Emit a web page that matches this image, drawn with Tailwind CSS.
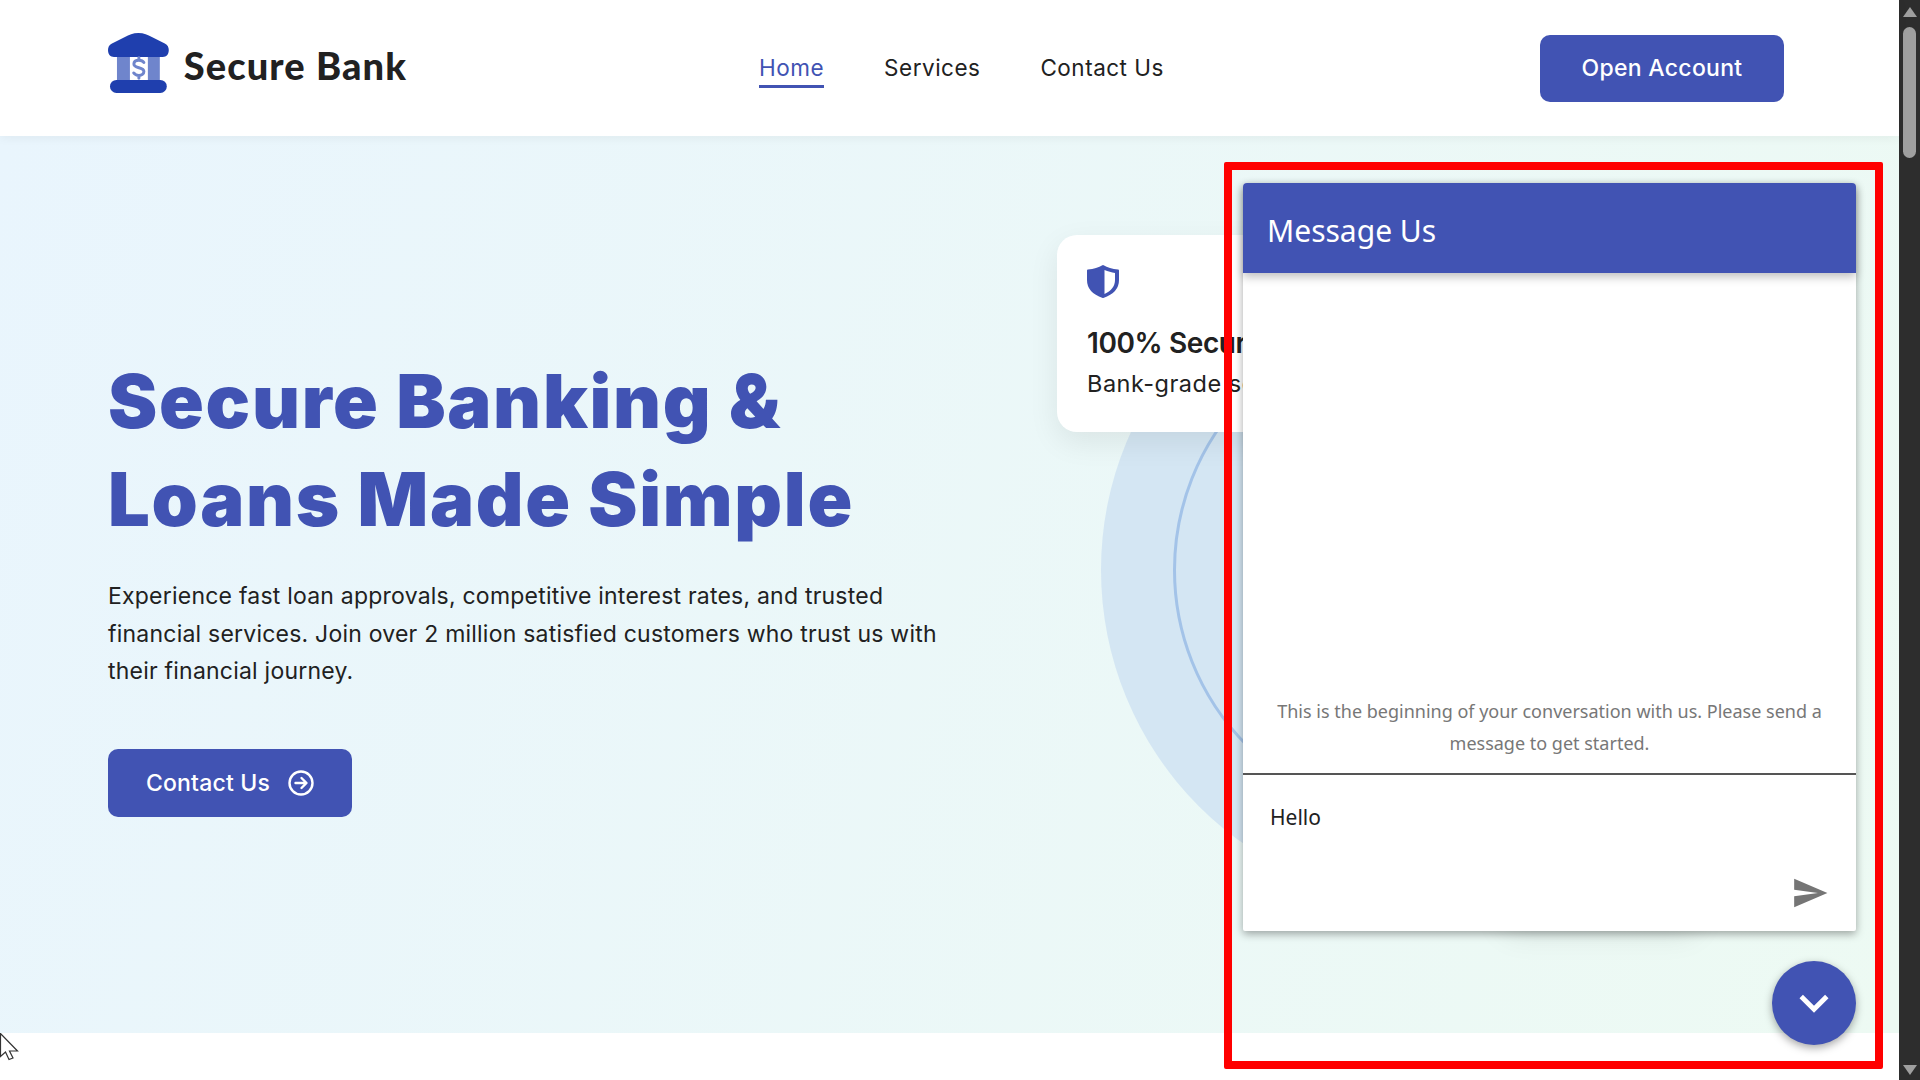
<!DOCTYPE html>
<html lang="en">
<head>
    <meta charset="UTF-8">
    <meta name="viewport" content="width=device-width, initial-scale=1.0">
    <title>Secure Bank</title>
    <script src="https://cdn.jsdelivr.net/npm/@tailwindcss/browser@4"></script>
</head>
<body class="h-[1080px] w-[1920px] overflow-hidden bg-white font-['Inter',sans-serif] text-[#212121]">
    <div class="relative flex h-[1080px]">
        <!-- Page -->
        <div class="relative flex h-full flex-1 flex-col">
            <header class="relative z-10 flex h-[136px] items-center justify-between bg-white pl-[108px] pr-[115px] shadow-[0_2px_10px_rgba(0,0,0,0.05)]">
                <div class="mb-[10px] flex w-[299px] items-center gap-[15px]">
                    <svg class="h-[60px] w-[61px]" viewBox="0 0 61 60">
                        <rect x="9" y="20" width="43" height="30" fill="#6f85cc"/>
                        <rect x="22" y="22" width="18" height="28" fill="#ffffff"/>
                        <path d="M30.500 0C36 0 40 1.800 44 4L57 10.500C60 12 61 14.500 61 17C61 21.500 58.500 24 55 24H6C2.500 24 0 21.500 0 17C0 14.500 1 12 4 10.500L17 4C21 1.800 25 0 30.500 0Z" fill="#1f3fae"/>
                        <rect x="2" y="47" width="57" height="13" rx="6.500" fill="#1f3fae"/>
                        <path d="M36 29.500C35 27.800 33 27.200 31 27.200C28 27.200 26 28.700 26 31C26 36 36 33.500 36 38.500C36 41 33.800 42.500 31 42.500C28.800 42.500 27 41.700 25.800 40M31 24.800V27.200M31 42.500V45.200" fill="none" stroke="#6f85cc" stroke-width="3" stroke-linecap="round"/>
                    </svg>
                    <span class="mt-[4px] whitespace-nowrap font-['Lato',sans-serif] text-[38px] font-black leading-none tracking-[1.1px] text-[#212121]">Secure Bank</span>
                </div>
                <nav class="mr-[24px] flex items-center gap-[60px] pt-[3px] text-[22.5px] leading-[32px] tracking-[0.5px]">
                    <a class="border-b-[3px] border-[#4153b3] pb-[1px] text-[#4153b3]">Home</a>
                    <a class="pb-[4px]">Services</a>
                    <a class="pb-[4px]">Contact Us</a>
                </nav>
                <button class="flex h-[67px] w-[244px] items-center justify-center rounded-[10px] bg-[#4153b3] text-[23px] font-medium tracking-[0.3px] text-white">Open Account</button>
            </header>

            <section class="relative h-[897px] overflow-hidden bg-linear-[110deg] from-[#e9f5fd] to-[#edfaf3] pl-[108px] pt-[216px]">
                <h1 class="text-[74px] font-black leading-[98px] tracking-[1.7px] text-[#4153b3]">Secure Banking &amp;<br>Loans Made Simple</h1>
                <p class="mt-[30px] w-[860px] text-[23px] leading-[37.5px] tracking-[0.22px] text-[#212121]">Experience fast loan approvals, competitive interest rates, and trusted<br>financial services. Join over 2 million satisfied customers who trust us with<br>their financial journey.</p>
                <button class="mt-[58px] flex h-[68px] w-[244px] items-center justify-center gap-[18px] rounded-[10px] bg-[#4153b3] pt-[1px] text-[23px] font-medium tracking-[0.2px] text-white">
                    Contact Us
                    <svg class="h-[26px] w-[26px]" viewBox="0 0 26 26" fill="none" stroke="#ffffff" stroke-width="2.400" stroke-linecap="round" stroke-linejoin="round"><circle cx="13" cy="13" r="11.500"/><path d="M7.500 13H18M13.500 8l5 5-5 5"/></svg>
                </button>

                <!-- Hero art behind the chat panel -->
                <div class="absolute left-[1101px] top-[100px] h-[668px] w-[668px] rounded-full bg-[#d4e6f3]"></div>
                <div class="absolute left-[1173px] top-[184px] h-[500px] w-[500px] rounded-full border-[3px] border-[#a3c3e8]"></div>
                <div class="absolute left-[1500px] top-[600px] h-[190px] w-[200px] rounded-[20px] bg-white shadow-[0_10px_30px_rgba(0,0,0,0.08)]"></div>
                <div class="absolute left-[1057px] top-[99px] h-[197px] w-[340px] rounded-[20px] bg-white pl-[30px] pt-[30px] shadow-[0_10px_30px_rgba(0,0,0,0.08)]">
                    <svg class="h-[33px] w-[32px]" viewBox="0 0 32 33">
                        <path d="M16 1C20 3.500 25.500 5 31 5.500V15C31 23.500 25 29 16 32C7 29 1 23.500 1 15V5.500C6.500 5 12 3.500 16 1Z" fill="#4153b3" stroke="#4153b3" stroke-width="2" stroke-linejoin="round"/>
                        <path d="M17.500 5C21 6.500 24.500 7.500 28 7.900V15C28 21.500 24 26 17.500 29Z" fill="#ffffff"/>
                    </svg>
                    <div class="mt-[27px] whitespace-nowrap text-[28px] font-semibold leading-[36px] tracking-[-0.4px]">100% Secure</div>
                    <div class="mt-[6px] whitespace-nowrap text-[23.5px] leading-[34px] tracking-[0.5px]">Bank-grade security</div>
                </div>
            </section>
            <div class="flex-1 bg-white"></div>
        </div>

        <!-- Scrollbar -->
        <aside class="flex h-full w-[21px] flex-col items-center bg-[#2d2d2d]">
            <div class="mt-[7px] h-0 w-0 border-x-[7px] border-b-[10px] border-x-transparent border-b-[#9f9f9f]"></div>
            <div class="mt-[10px] h-[131px] w-[13px] rounded-full bg-[#9f9f9f]"></div>
            <div class="mt-auto mb-[5px] h-0 w-0 border-x-[7px] border-t-[10px] border-x-transparent border-t-[#9f9f9f]"></div>
        </aside>

        <!-- Chat widget -->
        <div class="absolute left-[1243px] top-[183px] flex h-[748px] w-[613px] flex-col rounded-t-[4px] rounded-b-[2px] bg-white font-['Noto_Sans',sans-serif] shadow-[0_3px_8px_rgba(0,0,0,0.35)]">
            <div class="flex h-[90px] shrink-0 items-center rounded-t-[4px] bg-[#4153b3] pl-[24px] pt-[5px] text-[30px] text-white shadow-[0_4px_10px_rgba(0,0,0,0.25)]">Message Us</div>
            <div class="flex flex-1 flex-col justify-end px-[24px] pb-[14px] text-center text-[18px] leading-[32px] text-[#777777]">
                <p>This is the beginning of your conversation with us. Please send a message to get started.</p>
            </div>
            <div class="relative h-[158px] shrink-0 border-t-2 border-[#555555] pl-[27px] pt-[26px] text-[21px] leading-[32px] text-[#212121]">
                Hello
                <svg class="absolute right-[27px] top-[99px] h-[38px] w-[38px]" viewBox="0 0 24 24" fill="#757575"><path d="M2.010 21L23 12 2.010 3 2 10l15 2-15 2z"/></svg>
            </div>
        </div>

        <!-- Chat toggle -->
        <button class="absolute left-[1772px] top-[961px] flex h-[84px] w-[84px] items-center justify-center rounded-full bg-[#4153b3] shadow-[0_3px_8px_rgba(0,0,0,0.35)]">
            <svg class="h-[58px] w-[58px]" viewBox="0 0 24 24" fill="#ffffff"><path d="M16.590 8.590L12 13.170 7.410 8.590 6 10l6 6 6-6z"/></svg>
        </button>

        <!-- Annotation box -->
        <div class="pointer-events-none absolute left-[1224px] top-[162px] h-[907px] w-[659px] rounded-[2px] border-[8px] border-[#ff0000]"></div>

        <!-- Mouse cursor -->
        <svg class="absolute left-0 top-[1033px] h-[28px] w-[19px]" viewBox="0 0 19 28"><path d="M0.500 0.500V23.500L5.500 19L9 26.500L13 25L9.500 18H17.500Z" fill="#ffffff" stroke="#333333" stroke-width="1.200"/></svg>
    </div>
</body>
</html>
